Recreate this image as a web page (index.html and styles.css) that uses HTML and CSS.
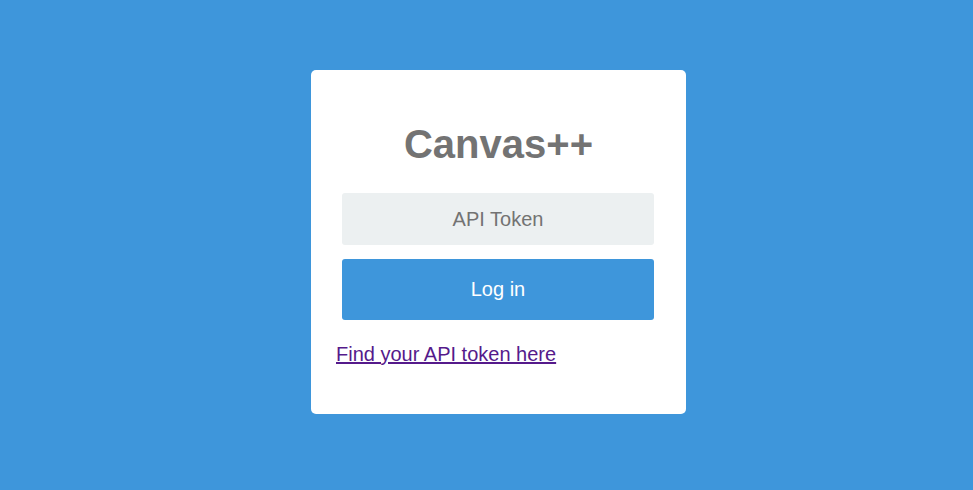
FILE: index.html
```html
<!DOCTYPE html>
<html>
<head>
<meta charset="utf-8">
<link rel="stylesheet" href="styles.css">
</head>
<body>
<div class="page">
  <div class="card">
    <h1 class="title">Canvas++</h1>
    <form class="form">
      <input class="token" type="text" placeholder="API Token">
      <button class="login" type="button">Log in</button>
    </form>
    <a class="help" href="#">Find your API token here</a>
  </div>
</div>
</body>
</html>
```
FILE: styles.css
```css
html, body {
  margin: 0;
  padding: 0;
  height: 100%;
}
body {
  background: #3e96db;
  font-family: "Liberation Sans", Arial, sans-serif;
}
.page {
  display: flex;
  justify-content: center;
  padding: 70px 0 0 24px;
}
.card {
  width: 375px;
  height: 344px;
  box-sizing: border-box;
  background: #fff;
  border-radius: 5px;
  padding: 51px 25px 0 25px;
}
.title {
  margin: 0;
  font-size: 40px;
  line-height: 46px;
  font-weight: bold;
  color: #737373;
  text-align: center;
}
.form {
  display: flex;
  flex-direction: column;
  gap: 14px;
  margin: 26px 7px 0 6px;
}
.token {
  height: 52px;
  box-sizing: border-box;
  border: none;
  border-radius: 3px;
  background: #ecf0f1;
  font-family: inherit;
  font-size: 20px;
  text-align: center;
  color: #737373;
  outline: none;
}
.token::placeholder {
  color: #737373;
}
.login {
  height: 61px;
  border: none;
  border-radius: 3px;
  background: #3e96db;
  color: #fff;
  font-family: inherit;
  font-size: 20px;
}
.help {
  display: block;
  margin-top: 22px;
  font-size: 20px;
  line-height: 24px;
  color: #551a8b;
  text-decoration: underline;
}
```
